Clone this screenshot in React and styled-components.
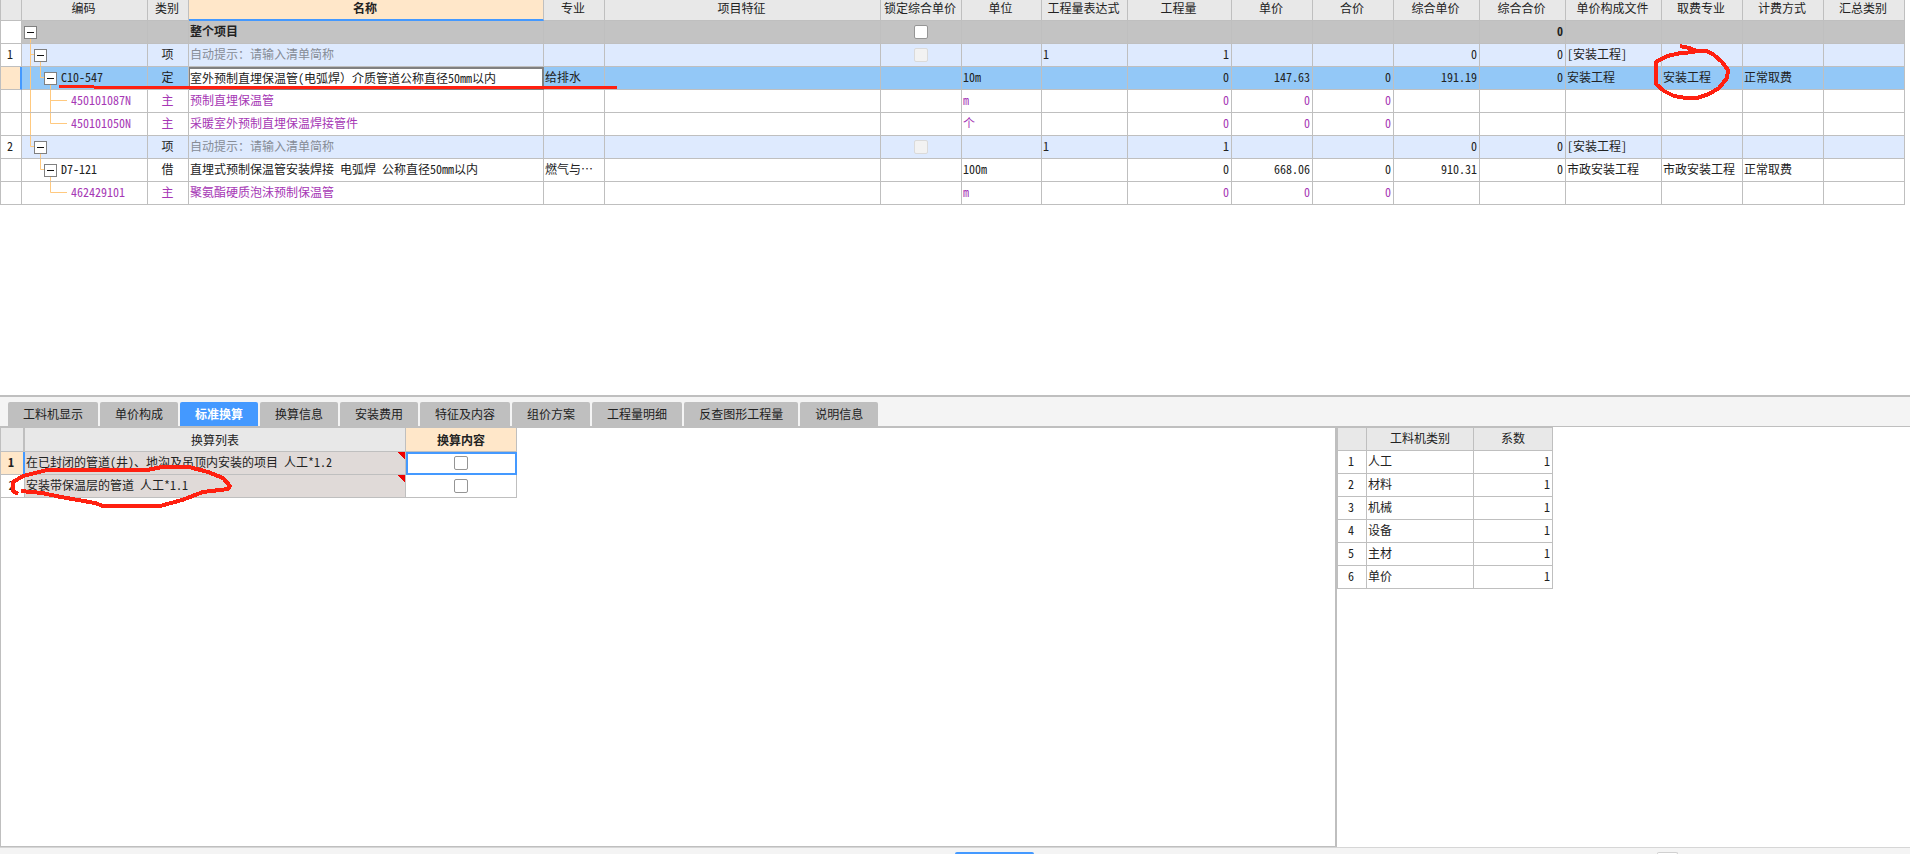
import React from "react"
import styled, { createGlobalStyle, css } from "styled-components"

const LINE = "#bfbfbf"
const BLUE = "#4499ff"
const CREAM = "#ffe7c9"
const RED = "#ff2010"

const GlobalStyle = createGlobalStyle`
  * {
    box-sizing: border-box;
  }
  body {
    margin: 0;
    background: #fff;
    color: #222;
    font-family: "Noto Sans CJK SC", sans-serif;
    font-size: 12px;
  }
`

const Page = styled.div`
  display: flex;
  flex-direction: column;
  min-height: 100vh;
  overflow: hidden;
`

const BudgetPane = styled.section`
  position: relative;
  flex: 395 1 0;
  padding-right: 5px;
`

const DetailPane = styled.section`
  position: relative;
  display: flex;
  flex-direction: column;
  flex: 450 1 0;
  border-top: 2px solid ${LINE};
`

const Grid = styled.table`
  table-layout: fixed;
  border-collapse: separate;
  border-spacing: 0;
  font-feature-settings: "hwid" 1;
  line-height: 16px;
  width: ${p => p.$width};
`

const FullWidth = styled.span`
  font-feature-settings: normal;
`

const cell = css`
  height: 23px;
  padding: 0 2px 2px 1px;
  border-right: 1px solid ${LINE};
  border-bottom: 1px solid ${LINE};
  overflow: hidden;
  white-space: nowrap;
  text-overflow: ellipsis;
  font-weight: normal;
  &:first-child {
    border-left: 1px solid ${LINE};
  }
`

const Head = styled.th`
  ${cell}
  height: 24px;
  padding: 0;
  background: #e8e8e8;
  ${p =>
    p.$short &&
    css`
      height: 21px;
      padding: 0 2px 4px 0;
      overflow: visible;
    `}
  ${p =>
    p.$active &&
    css`
      background: ${CREAM};
      font-weight: bold;
    `}
  ${p =>
    p.$underline &&
    css`
      padding-bottom: 3px;
      border-bottom: 2px solid ${BLUE};
    `}
  ${p => p.$divider && `border-right-width: 2px;`}
`

const RowNo = styled.th`
  ${cell}
  padding: 0 2px 2px 0;
  background: ${p => (p.$active ? CREAM : "#fff")};
  font-weight: ${p => (p.$bold ? "bold" : "normal")};
  ${p => p.$active && `border-right: 2px solid ${BLUE};`}
`

const Cell = styled.td`
  ${cell}
  text-align: ${p => p.$align || "left"};
  ${p => p.$muted && "color: #868c96;"}
  ${p =>
    p.$editing &&
    css`
      background: #fff;
      padding: 0 0 2px;
      border: 2px solid #808080;
      border-left-width: 1px;
    `}
`

const rowLooks = {
  root: "background: #c3c3c3; font-weight: bold; td { font-weight: bold; }",
  item: "background: #deeafe;",
  selected: "background: #93c8f7;",
  material: "color: #a637b5;",
  plain: ""
}

const Row = styled.tr`
  ${p => rowLooks[p.$look]}
`

const CodeCell = styled.td`
  ${cell}
  padding: 0;
`

const CodeBox = styled.div`
  display: flex;
  align-items: center;
  height: 22px;
`

const Code = styled.span`
  padding-bottom: 2px;
`

const Branches = styled.svg`
  flex: none;
  display: block;
  width: ${p => p.width}px;
  height: 22px;
  overflow: visible;
  path {
    fill: none;
    stroke: #ffc97f;
  }
`

const Toggle = styled.button`
  display: grid;
  place-items: center;
  flex: none;
  width: 13px;
  height: 13px;
  margin-right: 4px;
  padding: 0;
  border: 1px solid #808080;
  background: #fff;
  &::before {
    content: "";
    width: 7px;
    height: 1px;
    background: #111;
  }
`

const Check = styled.input.attrs({ type: "checkbox" })`
  appearance: none;
  display: block;
  width: 14px;
  height: 14px;
  margin: 2px auto 0;
  border: 1px solid #959595;
  border-radius: 2px;
  background: #fff;
  &:disabled {
    border-color: #dadada;
    background: #f2f2f2;
  }
  &:checked {
    background: ${BLUE};
  }
`

const TabBar = styled.div`
  display: flex;
  gap: 2px;
  padding: 5px 8px 0;
  background: #f4f4f4;
`

const Tab = styled.button`
  height: 24px;
  padding: 0 15px;
  border: 0;
  border-radius: 2px 2px 0 0;
  background: ${p => (p.$active ? BLUE : LINE)};
  color: ${p => (p.$active ? "#fff" : "#222")};
  font: inherit;
  font-weight: ${p => (p.$active ? "bold" : "normal")};
  line-height: 24px;
  white-space: nowrap;
`

const Panels = styled.div`
  display: flex;
  flex: 1;
`

const ConvertPanel = styled.div`
  flex: 1;
  border: solid ${LINE};
  border-width: 2px 2px 1px 1px;
`

const FactorPanel = styled.div`
  width: 30%;
  border-top: 1px solid ${LINE};
`

const ConvertGrid = styled(Grid)`
  th:first-child {
    border-left: 0;
  }
`

const FactorGrid = styled(Grid)`
  thead th {
    padding-bottom: 2px;
    border-top: 1px solid ${LINE};
  }
`

const RuleCell = styled(Cell)`
  background:
    linear-gradient(225deg, #f00000 5px, transparent 5px) no-repeat,
    #e0dad8;
`

const TickCell = styled(Cell)`
  padding: 0 0 2px;
  ${p => p.$focus && `border: 2px solid ${BLUE}; padding: 0 1px 3px 0;`}
`

const Footer = styled.footer`
  display: flex;
  align-items: flex-end;
  justify-content: space-between;
  height: 7px;
  padding: 0 232px 0 50%;
  border-top: 1px solid #d6d6d6;
  background: #f4f4f4;
`

const Handle = styled.div`
  width: 79px;
  height: 2px;
  border-radius: 2px 2px 0 0;
  background: ${BLUE};
`

const BoxEdge = styled.div`
  width: 21px;
  height: 2px;
  border: 1px solid #d0d0d0;
  border-bottom: 0;
  border-radius: 2px 2px 0 0;
  background: #fff;
`

// red pen strokes drawn over a pane
const Pen = styled.svg`
  position: absolute;
  top: 0;
  ${p => p.$side || "left"}: 0;
  overflow: visible;
  pointer-events: none;
  path {
    fill: none;
    stroke: ${RED};
    stroke-width: ${p => p.$weight || 3};
    stroke-linejoin: round;
    shape-rendering: crispEdges;
  }
`

const columns = [
  { label: "", width: 22 },
  { label: "编码", width: 126 },
  { label: "类别", width: 41, key: "kind", align: "center" },
  { label: "名称", width: 355, key: "name" },
  { label: "专业", width: 61, key: "major" },
  { label: "项目特征", key: "feature" },
  { label: "锁定综合单价", width: 81, key: "lock", align: "center" },
  { label: "单位", width: 80, key: "unit" },
  { label: "工程量表达式", width: 86, key: "expr" },
  { label: "工程量", width: 104, key: "qty", align: "right" },
  { label: "单价", width: 81, key: "price", align: "right" },
  { label: "合价", width: 81, key: "total", align: "right" },
  { label: "综合单价", width: 86, key: "fullPrice", align: "right" },
  { label: "综合合价", width: 86, key: "fullTotal", align: "right" },
  { label: "单价构成文件", width: 96, key: "file" },
  { label: "取费专业", width: 81, key: "feeMajor" },
  { label: "计费方式", width: 81, key: "feeMode" },
  { label: "汇总类别", width: 81, key: "summary" }
]

const hint = "自动提示：请输入清单简称"

const pipeName = (
  <>
    室外预制直埋保温管(电弧焊<FullWidth>）</FullWidth>介质管道公称直径50mm以内
  </>
)

const rows = [
  { look: "root", indent: 2, toggle: true, name: "整个项目", lock: "on", fullTotal: "0",
    lines: "M8.5 18V23" },
  { look: "item", no: "1", indent: 12, toggle: true, kind: "项", name: hint, muted: true, lock: "off",
    expr: "1", qty: "1", fullPrice: "0", fullTotal: "0", file: "[安装工程]",
    lines: "M8.5 0V23M8.5 10.5H12M18.5 17V23" },
  { look: "selected", active: true, indent: 22, toggle: true, code: "C10-547", kind: "定",
    name: pipeName, editing: true, major: "给排水",
    unit: "10m", qty: "0", price: "147.63", total: "0", fullPrice: "191.19", fullTotal: "0",
    file: "安装工程", feeMajor: "安装工程", feeMode: "正常取费",
    lines: "M8.5 0V23M18.5 0V10.5H22M28.5 17V23" },
  { look: "material", indent: 49, code: "450101087N", kind: "主", name: "预制直埋保温管",
    unit: "m", qty: "0", price: "0", total: "0",
    lines: "M8.5 0V23M28.5 0V23M28.5 10.5H45" },
  { look: "material", indent: 49, code: "450101050N", kind: "主", name: "采暖室外预制直埋保温焊接管件",
    unit: "个", qty: "0", price: "0", total: "0",
    lines: "M8.5 0V23M28.5 0V10.5H45" },
  { look: "item", no: "2", indent: 12, toggle: true, kind: "项", name: hint, muted: true, lock: "off",
    expr: "1", qty: "1", fullPrice: "0", fullTotal: "0", file: "[安装工程]",
    lines: "M8.5 0V10.5H12M18.5 17V23" },
  { look: "plain", indent: 22, toggle: true, code: "D7-121", kind: "借",
    name: "直埋式预制保温管安装焊接 电弧焊 公称直径50mm以内", major: "燃气与…",
    unit: "100m", qty: "0", price: "668.06", total: "0", fullPrice: "910.31", fullTotal: "0",
    file: "市政安装工程", feeMajor: "市政安装工程", feeMode: "正常取费",
    lines: "M18.5 0V10.5H22M28.5 17V23" },
  { look: "material", indent: 49, code: "462429101", kind: "主", name: "聚氨酯硬质泡沫预制保温管",
    unit: "m", qty: "0", price: "0", total: "0",
    lines: "M28.5 0V10.5H45" }
]

const tabs = [
  "工料机显示",
  "单价构成",
  "标准换算",
  "换算信息",
  "安装费用",
  "特征及内容",
  "组价方案",
  "工程量明细",
  "反查图形工程量",
  "说明信息"
]

const rules = [
  "在已封闭的管道(井)、地沟及吊顶内安装的项目 人工*1.2",
  "安装带保温层的管道 人工*1.1"
]

const factors = ["人工", "材料", "机械", "设备", "主材", "单价"]

const Columns = ({ widths }) => (
  <colgroup>
    {widths.map((w, i) => (
      <col key={i} width={w} />
    ))}
  </colgroup>
)

const BudgetRow = ({ row }) => (
  <Row $look={row.look}>
    <RowNo $active={row.active}>{row.no}</RowNo>
    <CodeCell>
      <CodeBox>
        <Branches width={row.indent}>
          <path d={row.lines} />
        </Branches>
        {row.toggle && <Toggle aria-label="折叠" />}
        <Code>{row.code}</Code>
      </CodeBox>
    </CodeCell>
    {columns.slice(2).map(({ key, label, align }) => (
      <Cell
        key={key}
        $align={align}
        $muted={key === "name" && row.muted}
        $editing={key === "name" && row.editing}
      >
        {key === "lock"
          ? row.lock && <Check aria-label={label} disabled={row.lock === "off"} />
          : row[key]}
      </Cell>
    ))}
  </Row>
)

const BudgetGrid = () => (
  <Grid $width="100%">
    <Columns widths={columns.map(c => c.width)} />
    <thead>
      <tr>
        {columns.map((c, i) => (
          <Head key={i} $short $active={c.key === "name"} $underline={c.key === "name"}>
            {c.label}
          </Head>
        ))}
      </tr>
    </thead>
    <tbody>
      {rows.map((row, i) => (
        <BudgetRow key={i} row={row} />
      ))}
    </tbody>
  </Grid>
)

const ConvertTable = () => (
  <ConvertGrid $width="516px">
    <Columns widths={[24, 381, 111]} />
    <thead>
      <tr>
        <Head $divider />
        <Head>换算列表</Head>
        <Head $active>换算内容</Head>
      </tr>
    </thead>
    <tbody>
      {rules.map((rule, i) => (
        <tr key={rule}>
          <RowNo $active={i === 0} $bold={i === 0}>
            {i + 1}
          </RowNo>
          <RuleCell>{rule}</RuleCell>
          <TickCell $focus={i === 0}>
            <Check aria-label={rule} />
          </TickCell>
        </tr>
      ))}
    </tbody>
  </ConvertGrid>
)

const FactorTable = () => (
  <FactorGrid $width="216px">
    <Columns widths={[30, 107, 79]} />
    <thead>
      <tr>
        <Head />
        <Head>工料机类别</Head>
        <Head>系数</Head>
      </tr>
    </thead>
    <tbody>
      {factors.map((name, i) => (
        <tr key={name}>
          <RowNo>{i + 1}</RowNo>
          <Cell>{name}</Cell>
          <Cell $align="right">1</Cell>
        </tr>
      ))}
    </tbody>
  </FactorGrid>
)

const App = () => (
  <>
    <GlobalStyle />
    <Page>
      <BudgetPane>
        <BudgetGrid />
        <Pen width="620" height="100">
          <path d="M59 86.5H94M94 87.5H617" />
        </Pen>
        <Pen $side="right" $weight={4} width="260" height="110">
          <path d="M30 46L39 48L47 51H57L64 55L72 62L78 70L77 78L69 88L59 94L47 98H36L24 96L14 91L6 84V62L17 56L31 53L45 52" />
        </Pen>
      </BudgetPane>
      <DetailPane>
        <TabBar role="tablist">
          {tabs.map(tab => (
            <Tab
              key={tab}
              role="tab"
              aria-selected={tab === "标准换算"}
              $active={tab === "标准换算"}
            >
              {tab}
            </Tab>
          ))}
        </TabBar>
        <Panels>
          <ConvertPanel>
            <ConvertTable />
          </ConvertPanel>
          <FactorPanel>
            <FactorTable />
          </FactorPanel>
        </Panels>
        <Pen $weight={4} width="240" height="120">
          <path d="M18 97L13 94V85L23 79L47 73H147L162 70H189L208 75L223 81L230 89L228 92L203 95L182 103L160 109H103L95 106L61 100L42 96L21 94" />
        </Pen>
      </DetailPane>
      <Footer>
        <Handle />
        <BoxEdge />
      </Footer>
    </Page>
  </>
)

export default App
